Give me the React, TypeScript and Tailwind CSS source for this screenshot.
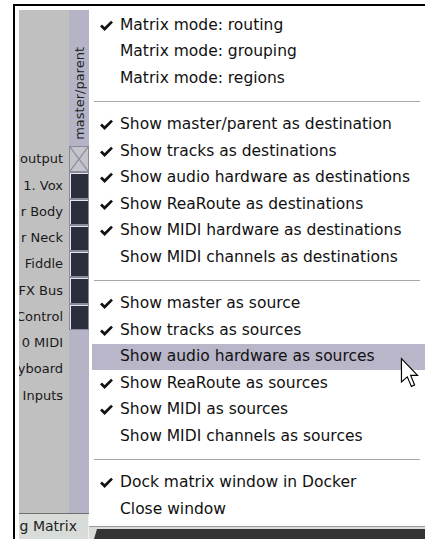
const font = "font-['DejaVu_Sans','Verdana',sans-serif]";

type Item = { label: string; checked?: boolean; active?: boolean } | "sep";

const items: Item[] = [
  { label: "Matrix mode: routing", checked: true },
  { label: "Matrix mode: grouping" },
  { label: "Matrix mode: regions" },
  "sep",
  { label: "Show master/parent as destination", checked: true },
  { label: "Show tracks as destinations", checked: true },
  { label: "Show audio hardware as destinations", checked: true },
  { label: "Show ReaRoute as destinations", checked: true },
  { label: "Show MIDI hardware as destinations", checked: true },
  { label: "Show MIDI channels as destinations" },
  "sep",
  { label: "Show master as source", checked: true },
  { label: "Show tracks as sources", checked: true },
  { label: "Show audio hardware as sources", active: true },
  { label: "Show ReaRoute as sources", checked: true },
  { label: "Show MIDI as sources", checked: true },
  { label: "Show MIDI channels as sources" },
  "sep",
  { label: "Dock matrix window in Docker", checked: true },
  { label: "Close window" },
];

// track names, clipped at the left edge of the panel like in the window
const rows = ["output", "1. Vox", "r Body", "r Neck", "Fiddle", "FX Bus", "Control", "0 MIDI", "yboard", "Inputs"];

function Check() {
  return (
    <svg width="13" height="11" viewBox="0 0 13 11">
      <path d="M1 5.5 L4.6 9 L12 1.6" fill="none" stroke="#111" strokeWidth="2.7" />
    </svg>
  );
}

function Cursor() {
  return (
    <svg width="19" height="31" viewBox="-1 -1 13 21" className="absolute left-[400px] top-[357px]">
      <path
        d="M0 0 L0 16 L4 12.5 L6.8 19 L9 18 L6.3 11.5 L11 11.5 Z"
        fill="#fff"
        stroke="#000"
        strokeWidth="0.8"
      />
    </svg>
  );
}

export default function App() {
  return (
    <div className={`relative w-[425px] h-[539px] overflow-hidden bg-white text-[#111] ${font}`}>
      <div className="ml-[13px] mt-[4px] h-[535px] border-l-2 border-t-2 border-black flex">
        {/* routing matrix window behind the menu */}
        <div className="w-[74px] pl-[4px] pt-[4px] flex flex-col text-[13px]">
          <div className="flex flex-1 min-h-0">
            <div className="w-[50px] bg-[#c0c0c0] pt-[136px] overflow-hidden flex flex-col text-[#1a1a1a]">
              {rows.map((r) => (
                <div key={r} className="h-[26.25px] flex items-center justify-end pr-[6px] whitespace-nowrap">
                  {r}
                </div>
              ))}
            </div>
            <div className="w-[20px] bg-[#b4b4c6] flex flex-col">
              <div className="h-[136px] flex items-end justify-center pb-[6px]">
                <span className="[writing-mode:vertical-rl] rotate-180 text-[13px] leading-[13px] text-[#222]">
                  master/parent
                </span>
              </div>
              <div className="h-[26.25px] border border-[#8a8a98] bg-[#c4c4cc]">
                <svg width="18" height="24" viewBox="0 0 18 24" className="block">
                  <path d="M0 0 L18 24 M18 0 L0 24" stroke="#8c8c9a" strokeWidth="1.2" />
                </svg>
              </div>
              {[0, 1, 2, 3, 4, 5].map((i) => (
                <div key={i} className="h-[26.25px] p-px bg-[#8a8a9a]">
                  <div className="h-full border-t border-l border-[#e4e4ee] bg-[#2b2e3d]" />
                </div>
              ))}
            </div>
          </div>
          <div className="h-px bg-[#6e6e6e]" />
          <div className="h-[25px] bg-[#d8dcd8] border-r border-[#f0f0f0] flex items-center justify-end pr-[11px] overflow-hidden whitespace-nowrap text-[14px] text-[#222]">
            g Matrix
          </div>
        </div>

        {/* context menu */}
        <div className="flex-1 flex flex-col text-[15.5px]">
          <div className="h-[521px] bg-white border-b border-[#9a9a9a] pt-[6px] flex flex-col">
            {items.map((it, i) =>
              it === "sep" ? (
                <div key={i} className="h-[20px] flex items-center mx-[5px]">
                  <div className="w-full border-t border-[#a8a8a8]" />
                </div>
              ) : (
                <div
                  key={i}
                  className={`h-[26.5px] ml-[3px] flex items-center whitespace-nowrap ${it.active ? "bg-[#b9b6c9]" : ""}`}
                >
                  <div className="w-[28px] pl-[8px] flex items-center">{it.checked && <Check />}</div>
                  <span>{it.label}</span>
                </div>
              )
            )}
          </div>
          <div className="flex-1 flex bg-[#d8dcd8]">
            <div className="flex-1 ml-[5px] mt-[2px] bg-[#343434] [clip-path:polygon(3px_0,100%_0,100%_100%,0_100%)]" />
          </div>
        </div>
      </div>
      <Cursor />
    </div>
  );
}
